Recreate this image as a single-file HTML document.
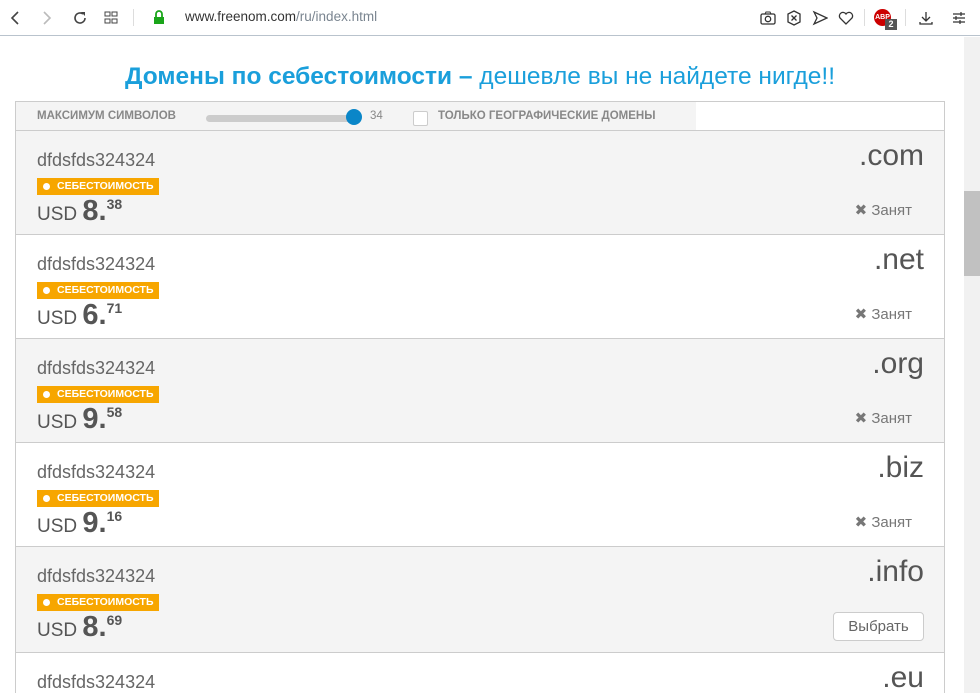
<!DOCTYPE html>
<html><head><meta charset="utf-8"><style>
*{margin:0;padding:0;box-sizing:border-box}
html,body{width:980px;height:693px;overflow:hidden}
body{background:#fff;font-family:"Liberation Sans","DejaVu Sans",sans-serif;position:relative}
.bar{position:absolute;left:0;top:0;width:980px;height:36px;background:#fff;border-bottom:1px solid #b9c3cd}
.url{position:absolute;left:185px;top:9px;font-size:13.5px;color:#333}
.url span{color:#7a8590}
.ic{position:absolute;top:10px}
.sb{position:absolute;left:964px;top:37px;width:16px;height:656px;background:#f1f1f1}
.th{position:absolute;left:964px;top:191px;width:16px;height:85px;background:#c1c1c1}
h1{position:absolute;left:0;width:960px;top:63px;text-align:center;font-size:24.5px;color:#1a9fdb;font-weight:normal;white-space:nowrap}
h1 b{font-weight:bold}
.box{position:absolute;left:15px;top:101px;width:930px;height:592px;border:1px solid #ccc;border-bottom:none;overflow:hidden}
.hdr{height:29px;border-bottom:1px solid #ccc;background:#f4f4f4;position:relative}
.hdr .w{position:absolute;left:680px;top:0;width:249px;height:28px;background:#fff}
.lbl{position:absolute;top:8px;font-size:11.5px;font-weight:bold;color:#888}
.row{position:relative;height:104px;border-bottom:1px solid #ccc}
.g{background:#f4f4f4}
.nm{position:absolute;left:21px;top:19px;font-size:18px;color:#666}
.bd{position:absolute;left:21px;top:47px;width:122px;height:17px;background:#f7a600;color:#fff;font-size:10.5px;font-weight:bold;line-height:17px;padding-left:20px}
.bd:before{content:"";position:absolute;left:6px;top:5px;width:7px;height:7px;border-radius:50%;background:#fff}
.pr{position:absolute;left:21px;top:64px;color:#555;font-size:19px;white-space:nowrap}
.pr b{font-size:29px}
.pr sup{font-size:14px;font-weight:bold;position:relative;top:-4px}
.tld{position:absolute;right:20px;top:8px;font-size:30px;color:#555}
.tk{position:absolute;right:32px;top:70px;font-size:15px;color:#777}
.btn{position:absolute;right:20px;top:65px;width:91px;height:29px;border:1px solid #ccc;border-radius:4px;background:#fff;font-size:15px;color:#666;text-align:center;line-height:27px}
</style></head><body>
<div class="bar">
<svg class="ic" style="left:8px" width="14" height="16"><path d="M10 2L4 8l6 6" stroke="#444" stroke-width="1.6" fill="none"/></svg>
<svg class="ic" style="left:40px" width="14" height="16"><path d="M4 2l6 6-6 6" stroke="#bbb" stroke-width="1.6" fill="none"/></svg>
<svg class="ic" style="left:72px" width="16" height="16"><path d="M13 8a5 5 0 1 1-2-4" stroke="#444" stroke-width="1.6" fill="none"/><path d="M9 2h4v4z" fill="#444"/></svg>
<svg class="ic" style="left:104px;top:11px" width="14" height="14"><rect x="1" y="1" width="5" height="4" stroke="#444" fill="none"/><rect x="8" y="1" width="5" height="4" stroke="#444" fill="none"/><rect x="1" y="8" width="5" height="4" stroke="#444" fill="none"/><rect x="8" y="8" width="5" height="4" stroke="#444" fill="none"/></svg>
<div style="position:absolute;left:133px;top:9px;width:1px;height:17px;background:#ddd"></div>
<svg class="ic" style="left:153px" width="12" height="15"><path d="M3 7V4a3 3 0 0 1 6 0v3" stroke="#1aa51a" stroke-width="1.8" fill="none"/><rect x="1" y="7" width="10" height="7" fill="#1aa51a"/></svg>
<div class="url">www.freenom.com<span>/ru/index.html</span></div>
<svg class="ic" style="left:760px" width="16" height="16"><rect x="1" y="4" width="14" height="10" rx="1.5" stroke="#333" stroke-width="1.3" fill="none"/><circle cx="8" cy="9" r="2.7" stroke="#333" stroke-width="1.3" fill="none"/><path d="M5 4l1-2h4l1 2" stroke="#333" fill="none"/></svg>
<svg class="ic" style="left:786px" width="16" height="16"><path d="M8 1l6 3v8l-6 3-6-3V4z" stroke="#333" stroke-width="1.3" fill="none"/><path d="M5.5 5.5l5 5M10.5 5.5l-5 5" stroke="#333" stroke-width="1.3"/></svg>
<svg class="ic" style="left:812px" width="16" height="16"><path d="M2 2l13 6-13 6 3-6z" stroke="#333" stroke-width="1.3" fill="none"/></svg>
<svg class="ic" style="left:838px" width="16" height="16"><path d="M8 14L2 8a3.3 3.3 0 0 1 6-4 3.3 3.3 0 0 1 6 4z" stroke="#333" stroke-width="1.3" fill="none"/></svg>
<div style="position:absolute;left:864px;top:9px;width:1px;height:17px;background:#ddd"></div>
<div style="position:absolute;left:874px;top:9px;width:17px;height:17px;border-radius:50%;background:#c00;color:#fff;font-size:7px;font-weight:bold;line-height:17px;text-align:center">ABP</div>
<div style="position:absolute;left:885px;top:19px;width:12px;height:11px;background:#555;color:#fff;font-size:9px;font-weight:bold;text-align:center;line-height:11px">2</div>
<div style="position:absolute;left:905px;top:9px;width:1px;height:17px;background:#ddd"></div>
<svg class="ic" style="left:918px" width="16" height="16"><path d="M8 2v8M4 7l4 4 4-4M2 12v2h12v-2" stroke="#333" stroke-width="1.3" fill="none"/></svg>
<svg class="ic" style="left:951px" width="16" height="16"><path d="M2 4h12M2 8h12M2 12h12" stroke="#333" stroke-width="1.2"/><path d="M10 2v4M5 6v4M9 10v4" stroke="#333" stroke-width="1.2"/></svg>
</div>
<div class="sb"></div><div class="th"></div>
<h1><b>Домены по себестоимости –</b> дешевле вы не найдете нигде!!</h1>
<div class="box">
<div class="hdr"><div class="w"></div>
<div class="lbl" style="left:21px">МАКСИМУМ СИМВОЛОВ</div>
<div style="position:absolute;left:190px;top:13px;width:150px;height:7px;border-radius:4px;background:#ccc"></div>
<div style="position:absolute;left:330px;top:7px;width:16px;height:16px;border-radius:50%;background:#0a86c8"></div>
<div style="position:absolute;left:354px;top:8px;font-size:11.5px;color:#888">34</div>
<div style="position:absolute;left:397px;top:9px;width:15px;height:15px;border:1px solid #ccc;background:#fff;border-radius:2px"></div>
<div class="lbl" style="left:422px">ТОЛЬКО ГЕОГРАФИЧЕСКИЕ ДОМЕНЫ</div>
</div>
<div class="row g"><div class="nm">dfdsfds324324</div><div class="bd">СЕБЕСТОИМОСТЬ</div><div class="pr">USD <b>8.</b><sup>38</sup></div><div class="tld">.com</div><div class="tk">✖ Занят</div></div>
<div class="row"><div class="nm">dfdsfds324324</div><div class="bd">СЕБЕСТОИМОСТЬ</div><div class="pr">USD <b>6.</b><sup>71</sup></div><div class="tld">.net</div><div class="tk">✖ Занят</div></div>
<div class="row g"><div class="nm">dfdsfds324324</div><div class="bd">СЕБЕСТОИМОСТЬ</div><div class="pr">USD <b>9.</b><sup>58</sup></div><div class="tld">.org</div><div class="tk">✖ Занят</div></div>
<div class="row"><div class="nm">dfdsfds324324</div><div class="bd">СЕБЕСТОИМОСТЬ</div><div class="pr">USD <b>9.</b><sup>16</sup></div><div class="tld">.biz</div><div class="tk">✖ Занят</div></div>
<div class="row g" style="height:106px"><div class="nm">dfdsfds324324</div><div class="bd">СЕБЕСТОИМОСТЬ</div><div class="pr">USD <b>8.</b><sup>69</sup></div><div class="tld">.info</div><div class="btn">Выбрать</div></div>
<div class="row"><div class="nm">dfdsfds324324</div><div class="tld">.eu</div></div>
</div>
</body></html>
